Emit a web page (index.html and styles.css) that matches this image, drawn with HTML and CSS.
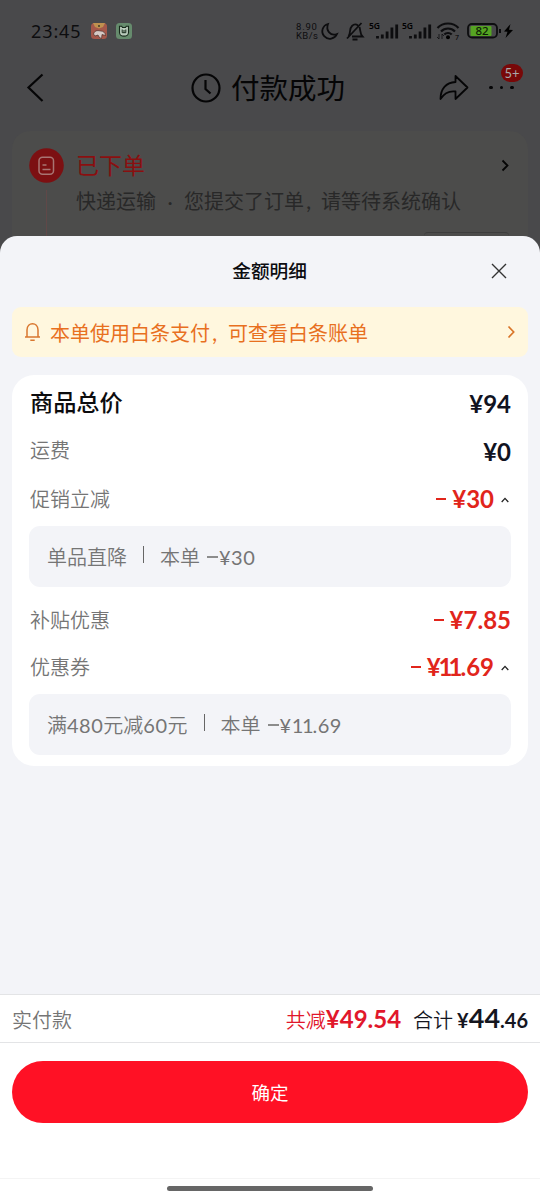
FILE: index.html
```html
<!DOCTYPE html>
<html lang="zh-CN">
<head>
<meta charset="utf-8">
<meta name="viewport" content="width=device-width, initial-scale=1">
<title>金额明细</title>
<link rel="stylesheet" href="styles.css">
</head>
<body>
<div class="screen">
  <div class="backdrop">
    <div class="status">
      <span class="time">23:45</span>
      <svg class="app-icon" width="16" height="16" viewBox="0 0 16 16"><rect width="16" height="16" rx="3.500" fill="#a5584a"/><path d="M2 0h12L12 4 8 5.500 4 4z" fill="#c0914f"/><circle cx="8" cy="3" r=".9" fill="#332"/><path d="M2.500 11c1-3 3-4 7-3 3 0 5 2 5 4.500L11 11.500l-.5 4-2-1-1.500-2.500-3 1z" fill="#d6c9c4" stroke="#3b2522" stroke-width=".6"/></svg>
      <svg class="app-icon second" width="16" height="16" viewBox="0 0 16 16"><rect width="16" height="16" rx="3.500" fill="#668b6d"/><path d="M3.500 3.200h2.200l.8 1.300h3l.8-1.300h2.200v6.200c0 5-9 5-9 0z" fill="#b9cbbb" stroke="#17291b" stroke-width="1.100"/><path d="M6.200 6.500v3.200h3.600V6.500M8 7v2.500" fill="none" stroke="#17291b"/></svg>
      <div class="status-right">
        <span class="speed"><span>8.90</span><span>KB/s</span></span>
        <svg class="moon" width="17" height="17" viewBox="0 0 17 17"><path d="M7 1C1.500 2.500-.5 9 3.200 13.200c4 4.400 10.600 2.800 12.800-2.200C9.500 13.500 4.500 7.500 7 1z" class="line"/></svg>
        <svg class="mute" width="18" height="19" viewBox="0 0 18 19"><path d="M13.500 5C14.500 8 14 12 16.500 14.500H6M2.500 14C5 11 3 7 6 4c1.500-1.500 4-2 6-.5M1 16.500L15.500 1M6.500 17.500h5" class="line"/></svg>
        <svg class="signal" width="31" height="20" viewBox="0 0 31 20"><text x="0" y="8" class="net">5G</text><path d="M8.500 15v2.500M13.300 13.500v4M18.100 10.500v7M22.900 6.500v11M27.700 3.500v14" class="bars"/></svg>
        <svg class="signal" width="31" height="20" viewBox="0 0 31 20"><text x="0" y="8" class="net">5G</text><path d="M8.500 15v2.500M13.300 13.500v4M18.100 10.500v7M22.900 6.500v11M27.700 3.500v14" class="bars"/></svg>
        <svg class="wifi" width="24" height="20" viewBox="0 0 24 20"><path d="M1.500 7c5.500-6 15.500-6 21 0M5 10.500c4-4 10-4 14 0M8.300 13.500c2-2 5.400-2 7.400 0" class="arc"/><circle cx="12" cy="16.300" r="2"/><path d="M3 13v5M1 16l2 2M6 18v-5l2 2" class="tiny"/><text x="19" y="18.500" class="seven">7</text></svg>
        <svg class="battery" width="35" height="16" viewBox="0 0 35 16"><rect x="1" y="1" width="29" height="13.500" rx="4" class="line"/><rect x="3.500" y="3" width="21" height="10" rx="1" fill="#55a422"/><text x="8.500" y="12" class="charge">82</text><path d="M33 6v4" class="cap"/></svg>
        <svg class="bolt" width="9" height="14" viewBox="0 0 9 14"><path d="M6.500 0L0 7.500l3.500.2L1.500 14 9 6 5 5.800z"/></svg>
      </div>
    </div>
    <div class="nav">
      <svg class="back" width="18" height="30" viewBox="0 0 18 30"><path d="M15.500 1.500L1.500 14.500l14 13.500" /></svg>
      <div class="nav-title">
        <svg width="30" height="30" viewBox="0 0 30 30"><circle cx="15" cy="15" r="13.500"/><path d="M14.500 7v9l5 4.500"/></svg>
        <span>付款成功</span>
      </div>
      <svg class="share" width="30" height="28" viewBox="0 0 30 28"><path d="M16.500 2L28.500 13.500 16.500 25v-7.500C9 16.500 5 19.500 1.500 25 1.500 15 7 8.500 16.500 8z"/></svg>
      <div class="more"><i></i><i></i><i></i><span class="badge">5+</span></div>
    </div>
    <div class="order">
      <div class="rail">
        <svg width="35" height="35" viewBox="0 0 35 35"><circle cx="17.500" cy="17.500" r="17.300" class="disc"/><rect x="10" y="9.300" width="14.500" height="17" rx="3.500"/><path d="M13.500 17h4M13.500 21.500h8"/></svg>
        <i class="thread"></i>
      </div>
      <div class="order-text">
        <div class="order-state">已下单</div>
        <div class="order-note">快递运输<span class="dot">·</span>您提交了订单<span class="comma">,</span>请等待系统确认</div>
      </div>
      <svg class="order-arrow" width="8" height="13" viewBox="0 0 8 13"><path d="M1.500 1.500l5 5-5 5"/></svg>
      <i class="ghost-button"></i>
    </div>
  </div>

  <div class="sheet">
    <div class="sheet-head">
      <h1>金额明细</h1>
      <svg class="close" width="16" height="16" viewBox="0 0 16 16"><path d="M1 1l14 14M15 1L1 15"/></svg>
    </div>
    <div class="banner">
      <svg class="bell" width="18" height="20" viewBox="0 0 18 20"><path d="M1 15h15M3 15V8c0-8.500 11-8.500 11 0v7M6.300 18.300h4.400"/></svg>
      <span class="banner-text">本单使用白条支付<span class="comma">,</span>可查看白条账单</span>
      <svg class="banner-arrow" width="8" height="14" viewBox="0 0 8 14"><path d="M1.500 1.500L6.700 7l-5.200 5.500"/></svg>
    </div>
    <div class="card">
      <div class="row total"><span>商品总价</span><b class="sum">¥94</b></div>
      <div class="row shipping"><span>运费</span><b class="sum">¥0</b></div>
      <div class="row promo"><span>促销立减</span><b class="sum off"><i class="minus"></i>¥30</b><svg class="fold" width="8" height="6" viewBox="0 0 8 6"><path d="M.7 5L4 1.400 7.300 5"/></svg></div>
      <div class="detail"><span>单品直降</span><i class="bar"></i><span>本单</span><i class="dash"></i><span class="num">¥30</span></div>
      <div class="row subsidy"><span>补贴优惠</span><b class="sum off"><i class="minus"></i>¥7.85</b></div>
      <div class="row coupon"><span>优惠券</span><b class="sum off"><i class="minus"></i>¥<span class="ones">11</span>.69</b><svg class="fold" width="8" height="6" viewBox="0 0 8 6"><path d="M.7 5L4 1.400 7.300 5"/></svg></div>
      <div class="detail"><span>满<span class="num">480</span>元减<span class="num">60</span>元</span><i class="bar"></i><span>本单</span><i class="dash"></i><span class="num">¥<span class="thin-ones">11</span>.69</span></div>
    </div>
    <div class="footer">
      <div class="paid">
        <span class="paid-label">实付款</span>
        <span class="saved">共减<b>¥49.54</b></span>
        <span class="due">合计<b><small class="yen">¥</small>44<small>.46</small></b></span>
      </div>
      <button class="confirm">确定</button>
      <div class="home"><i></i></div>
    </div>
  </div>
</div>
</body>
</html>
```
FILE: styles.css
```css
* { box-sizing: border-box; }
body { margin: 0; font-family: Lato, "Noto Sans CJK SC", sans-serif; }
svg { display: block; flex: none; overflow: visible; }
i { display: block; flex: none; }

.screen { width: 540px; height: 1201px; display: flex; flex-direction: column; background: #49494b; overflow: hidden; }
.backdrop { height: 236px; flex: none; }

.status { height: 60px; display: flex; align-items: center; padding: 2px 27px 0 31px; color: #0d0d0f; }
.time { font: 400 18px/20px "Noto Sans", sans-serif; letter-spacing: .9px; width: 60px; }
.app-icon { margin-right: 9px; }
.status-right { margin-left: auto; display: flex; align-items: center; }
.status-right .line { fill: none; stroke: #0d0d0f; stroke-width: 1.8; }
.speed { display: flex; flex-direction: column; font: 400 9.500px/9px Roboto, sans-serif; width: 25px; margin-top: -1px; }
.speed span:first-child { letter-spacing: .8px; }
.speed span:last-child { letter-spacing: .4px; }
.mute { margin: 0 5px 0 8px; }
.signal { margin-right: 2px; }
.net { font: 600 8.500px "Noto Sans", sans-serif; }
.bars { stroke: #0d0d0f; stroke-width: 2.800; fill: none; }
.wifi { margin: 0 7px 0 1px; }
.arc { stroke: #0d0d0f; stroke-width: 2.200; fill: none; }
.tiny { stroke: #0d0d0f; stroke-width: .8; fill: none; }
.seven { font: 7px "Noto Sans", sans-serif; }
.charge { font: 500 11.500px "Noto Sans", sans-serif; fill: #0d1d05; }
.cap { stroke: #0d0d0f; stroke-width: 2; }
.bolt { margin-left: 2px; }

.nav { height: 71px; display: flex; align-items: center; padding: 0 24px 16px 27px; }
.nav svg { fill: none; stroke: #050506; stroke-width: 2.200; }
.nav-title { display: flex; align-items: center; gap: 10px; margin-left: 146px; font-size: 28.500px; line-height: 40px; color: #050506; }
.share { margin-left: 94px; }
.share path { stroke-width: 1.800; stroke-linejoin: round; }
.more { position: relative; display: flex; gap: 7px; margin-left: 20px; }
.more i { width: 3.500px; height: 3.500px; border-radius: 50%; background: #050506; }
.badge { position: absolute; left: 12px; top: -22px; width: 22px; height: 18px; border-radius: 9px; background: #780808; color: #aaa; font: 13px/18px Lato, sans-serif; text-align: center; }

.order { position: relative; height: 105px; margin: 0 12px; padding: 17px 19px 0 17px; display: flex; border-radius: 18px 18px 0 0; background: #4c4c4b; }
.rail { width: 35px; display: flex; flex-direction: column; align-items: center; gap: 7px; }
.rail svg { fill: none; stroke: #a87472; stroke-width: 1.500; }
.rail .disc { fill: #7c1012; stroke: none; }
.thread { width: 1px; height: 46px; background: #604848; }
.order-text { margin-left: 12px; }
.order-state { font-size: 23px; line-height: 34px; color: #8a0f10; }
.order-note { margin-top: 2px; font-size: 20px; line-height: 34px; color: #282828; white-space: nowrap; }
.dot { display: inline-block; width: 28px; text-align: center; }
.comma { display: inline-block; width: 18px; padding-left: 2px; font-size: 23px; line-height: 20px; }
.order-note .comma { width: 17px; }
.order-arrow { margin: 11px 0 0 auto; fill: none; stroke: #050505; stroke-width: 1.800; }
.ghost-button { position: absolute; right: 19px; bottom: 0; width: 85px; height: 4px; border-top: 1px solid #3d3d3d; border-radius: 4px 4px 0 0; }

.sheet { flex: 1; display: flex; flex-direction: column; border-radius: 17px 17px 0 0; background: #f3f4f8; overflow: hidden; }
.sheet-head { height: 71px; flex: none; display: flex; align-items: center; justify-content: flex-end; padding: 0 33px 2px 0; }
h1 { margin: 1px 184px 0 0; font-size: 18.700px; line-height: 28px; font-weight: 500; color: #0c0c10; }
.close { stroke: #333; stroke-width: 1.400; }
.banner { height: 50px; flex: none; margin: 0 12px; padding: 0 13px 0 12px; display: flex; align-items: center; border-radius: 9px; background: #fff7de; color: #e8701f; font-size: 20px; }
.bell { margin-right: 8px; fill: none; stroke: #d9772f; stroke-width: 1.500; }
.banner-arrow { margin-left: auto; fill: none; stroke: #d97528; stroke-width: 1.700; }
.card { height: 391px; flex: none; margin: 18px 12px 0; padding: 4px 17px 0 18px; border-radius: 22px; background: #fff; }
.row { height: 48px; display: flex; align-items: center; font-size: 20px; line-height: 30px; color: #757575; font-weight: 350; }
.total { font-size: 23.200px; font-weight: 500; color: #0c0c0e; }
.sum { margin-left: auto; display: flex; align-items: center; font-size: 24px; line-height: 30px; font-weight: 700; color: #11131f; }
.total, .shipping { padding-bottom: 2px; }
.total .sum, .shipping .sum { padding-top: 4px; }
.off { color: #e1251b; }
.minus { width: 10px; height: 2px; margin-right: 6px; background: #e1251b; }
.fold { margin: 2px 2px 0 7px; fill: none; stroke: #222; stroke-width: 1.300; }
.detail { height: 61px; padding: 0 18px; display: flex; align-items: center; border-radius: 11px; background: #f3f4f8; color: #757575; font-size: 20px; font-weight: 350; margin-left: -1px; }
.detail .num { letter-spacing: .5px; font-weight: 400; }
.promo { height: 51px; padding-bottom: 3px; }
.subsidy { height: 48px; margin-top: 9px; }
.coupon { height: 50px; padding-bottom: 4px; }
.bar { width: 1px; height: 17px; margin: -5px 16px 0; background: #666; }
.dash { width: 11px; height: 2px; margin: 0 1px 0 7px; background: #8c8c8c; }
.ones { letter-spacing: -4px; margin: 0 2px 0 -2px; }
.detail .thin-ones { letter-spacing: -1.200px; }
.footer { margin-top: auto; height: 207px; background: #fff; border-top: 1px solid #e3e4e6; }
.paid { height: 48px; padding: 0 12px; display: flex; align-items: center; border-bottom: 1px solid #e3e4e6; font-size: 20px; line-height: 30px; color: #757575; font-weight: 350; }
.paid-label { padding-top: 2px; }
.saved { margin-left: auto; color: #e1172b; display: flex; align-items: baseline; padding-top: 2px; }
.saved b { font-size: 24px; font-weight: 700; }
.due { margin-left: 12px; color: #15161f; display: flex; align-items: baseline; }
.due b { margin-left: 4px; font-size: 27px; font-weight: 700; }
.due small { font-size: 20px; }
.confirm { display: block; width: 516px; height: 62px; margin: 18px 12px 0; padding: 0; border: 0; border-radius: 32px; background: #ff1125; color: #fff; font: 400 18.500px "Noto Sans CJK SC", sans-serif; }
.home { height: 23px; margin-top: 55px; padding-top: 7px; border-top: 1px solid #f4f4f4; }
.home i { width: 206px; height: 5px; margin: 0 auto; border-radius: 3px; background: #666; }
```
